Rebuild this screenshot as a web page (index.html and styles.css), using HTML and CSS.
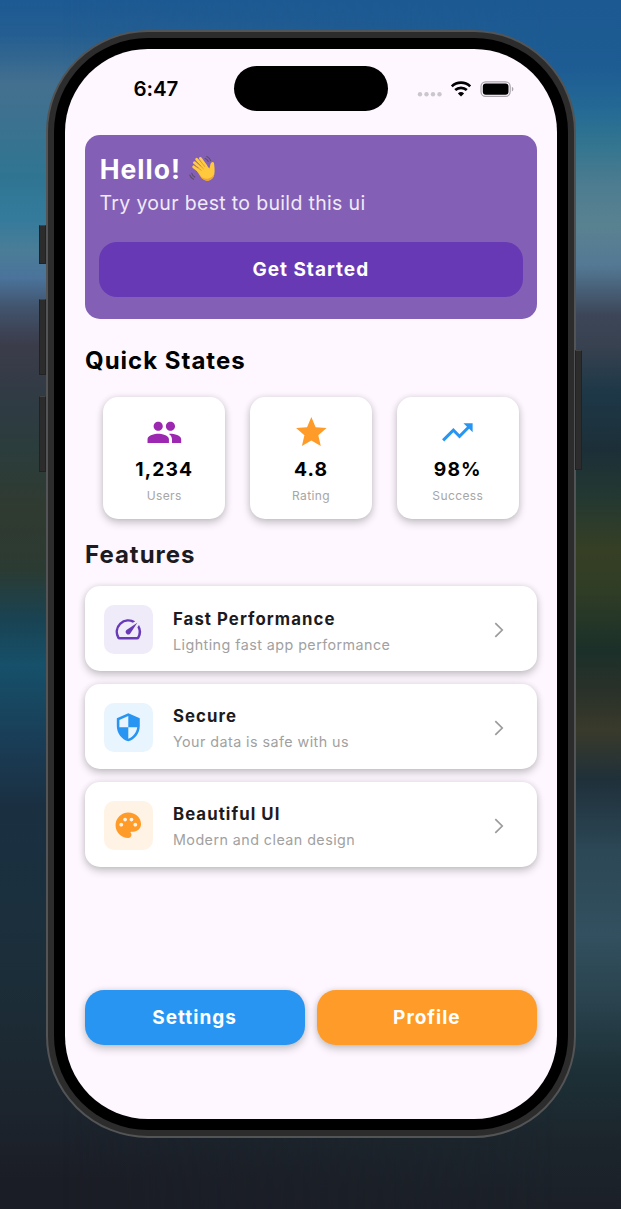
FILE: index.html
```html
<!DOCTYPE html>
<html lang="en">
<head>
<meta charset="utf-8">
<title>Hello</title>
<link rel="stylesheet" href="styles.css">
</head>
<body>
<div class="wallpaper"></div>
<div class="phone">
  <span class="key key-action"></span>
  <span class="key key-up"></span>
  <span class="key key-down"></span>
  <span class="key key-power"></span>
  <div class="bezel">
    <div class="screen">
      <header class="status">
        <span class="time">6:47</span>
        <span class="island"></span>
        <svg class="indicators" width="98" height="18" viewBox="0 0 98 18">
          <g fill="#cbc5ce"><circle cx="4" cy="13.2" r="2.2"/><circle cx="10.5" cy="13.2" r="2.2"/><circle cx="17" cy="13.2" r="2.2"/><circle cx="23.5" cy="13.2" r="2.2"/></g>
          <g fill="none" stroke="#000" stroke-width="2.7"><path d="M35.8 5.4a13.3 13.3 0 0 1 18.4 0"/><path d="M39.2 9.1a8.4 8.4 0 0 1 11.6 0"/></g>
          <path d="M45 15.6l-3.1-3.2a4.6 4.6 0 0 1 6.2 0z"/>
          <rect x="65" y=".8" width="29.2" height="14.6" rx="4.6" fill="none" stroke="#a9a4ab" stroke-width="1.2"/>
          <rect x="66.8" y="2.5" width="25.7" height="11.2" rx="3"/>
          <path d="M95.9 5.8c2 .8 2 3.9 0 4.7z" fill="#a9a4ab"/>
        </svg>
      </header>
      <main class="content">
        <section class="hero">
          <h1 class="hello"><span>Hello!</span>
            <svg class="wave" width="28" height="28" viewBox="0 0 28 28">
              <g fill="none" stroke="#5d4c6c" stroke-width="1.1" stroke-linecap="round"><path d="M16.2 3.4q2 .8 3 3M17.8 1.4q2.7 1.2 3.9 4.2M2.8 18.4q.6 2.4 3 3.7M.8 20q1 2.9 3.8 4.3"/></g>
              <g fill="none" stroke="#ffcb45" stroke-width="2.7" stroke-linecap="round"><path d="M13 14L5.4 7.6M15 12L7.6 4.2M17 11L11.4 3.4M12 17.4L4.6 11.8"/></g>
              <path d="M7 14.8L16 8.8Q18 10.5 20.3 13.5C21.4 11.5 20.8 9.5 22 7.9Q23.5 6.2 24.9 7.7C25.3 10.3 25.7 13 25.6 16.4Q25.4 22.2 21.6 24.8Q17 27 13 23.6Z" fill="#ffc83d"/>
              <path d="M9.5 19Q14.3 24.4 18.7 23.8Q23.6 22.7 25.5 18.8Q25.1 22.6 21.6 24.8Q17 27.1 13 23.6Z" fill="#efa32f"/>
              <g fill="none" stroke="#d18a35" stroke-width=".7" stroke-linecap="round"><path d="M5.6 10l6.6 5.3M7.2 6.8l7 6.7M10.3 4.8l5.4 6.7"/></g>
            </svg>
          </h1>
          <p class="tagline">Try your best to build this ui</p>
          <button class="start">Get Started</button>
        </section>
        <h2 class="heading black">Quick States</h2>
        <section class="stats">
          <div class="stat">
            <svg width="36.7" height="36.7" viewBox="0 0 24 24" fill="#9c27b0"><path d="M16 11c1.66 0 2.99-1.34 2.99-3S17.66 5 16 5s-3 1.34-3 3 1.34 3 3 3zm-8 0c1.66 0 2.99-1.34 2.99-3S9.66 5 8 5 5 6.34 5 8s1.34 3 3 3zm0 2c-2.33 0-7 1.17-7 3.5V19h14v-2.5c0-2.33-4.67-3.5-7-3.5zm8 0c-.29 0-.62.02-.97.05 1.16.84 1.97 1.97 1.97 3.45V19h6v-2.5c0-2.33-4.67-3.5-7-3.5z"/></svg>
            <strong class="value">1,234</strong><span class="label">Users</span>
          </div>
          <div class="stat">
            <svg width="36.7" height="36.7" viewBox="0 0 24 24" fill="#ff9b28"><path d="M12 17.27L18.18 21l-1.64-7.03L22 9.24l-7.19-.61L12 2 9.19 8.63 2 9.24l5.46 4.73L5.82 21z"/></svg>
            <strong class="value">4.8</strong><span class="label">Rating</span>
          </div>
          <div class="stat">
            <svg width="36.7" height="36.7" viewBox="0 0 24 24" fill="#2895f2"><path d="M16 6l2.29 2.29-4.88 4.88-4-4L2 16.59 3.41 18l6-6 4 4 6.3-6.29L22 12V6z"/></svg>
            <strong class="value">98%</strong><span class="label">Success</span>
          </div>
        </section>
        <h2 class="heading features-title">Features</h2>
        <section class="features">
          <article class="feature">
            <span class="tile violet"><svg width="30.6" height="30.6" viewBox="0 0 24 24" fill="#673ab7"><path d="M20.38 8.57l-1.23 1.85a8 8 0 0 1-.22 7.58H5.07A8 8 0 0 1 15.58 6.85l1.85-1.23A10 10 0 0 0 3.35 19a2 2 0 0 0 1.72 1h13.85a2 2 0 0 0 1.74-1 10 10 0 0 0-.27-10.44zm-9.79 6.84a2 2 0 0 0 2.83 0l5.66-8.49-8.49 5.66a2 2 0 0 0 0 2.83z"/></svg></span>
            <div class="copy"><h3 class="title">Fast Performance</h3><p class="detail">Lighting fast app performance</p></div>
            <svg class="chevron" width="10" height="16" viewBox="0 0 10 16"><path d="M1.3 1.2L8.2 8l-6.9 6.8"/></svg>
          </article>
          <article class="feature">
            <span class="tile sky"><svg width="30.6" height="30.6" viewBox="0 0 24 24" fill="#2895f2"><path d="M12 1L3 5v6c0 5.55 3.84 10.74 9 12 5.16-1.26 9-6.45 9-12V5l-9-4zm0 10.99h7c-.53 4.12-3.28 7.79-7 8.94V12H5V6.3l7-3.11v8.8z"/></svg></span>
            <div class="copy"><h3 class="title">Secure</h3><p class="detail">Your data is safe with us</p></div>
            <svg class="chevron" width="10" height="16" viewBox="0 0 10 16"><path d="M1.3 1.2L8.2 8l-6.9 6.8"/></svg>
          </article>
          <article class="feature">
            <span class="tile peach"><svg width="30.6" height="30.6" viewBox="0 0 24 24" fill="#ff9b28"><path d="M12 2C6.49 2 2 6.49 2 12s4.49 10 10 10c1.38 0 2.5-1.12 2.5-2.5 0-.61-.23-1.2-.64-1.67-.08-.1-.13-.21-.13-.33 0-.28.22-.5.5-.5H16c3.31 0 6-2.69 6-6 0-4.96-4.49-9-10-9zm5.5 11c-.83 0-1.5-.67-1.5-1.5s.67-1.5 1.5-1.5 1.5.67 1.5 1.5-.67 1.5-1.5 1.5zm-3-4c-.83 0-1.5-.67-1.5-1.5S13.67 6 14.5 6s1.5.67 1.5 1.5S15.33 9 14.5 9zM5 11.5c0-.83.67-1.5 1.5-1.5S8 10.67 8 11.5 7.33 13 6.5 13 5 12.33 5 11.5zm6-4C11 8.33 10.33 9 9.5 9S8 8.33 8 7.5 8.67 6 9.5 6s1.5.67 1.5 1.5z"/></svg></span>
            <div class="copy"><h3 class="title">Beautiful UI</h3><p class="detail">Modern and clean design</p></div>
            <svg class="chevron" width="10" height="16" viewBox="0 0 10 16"><path d="M1.3 1.2L8.2 8l-6.9 6.8"/></svg>
          </article>
        </section>
        <footer class="actions">
          <button class="action blue">Settings</button>
          <button class="action orange">Profile</button>
        </footer>
      </main>
    </div>
  </div>
</div>
</body>
</html>
```
FILE: styles.css
```css
* { box-sizing: border-box; margin: 0; }

body {
  height: 1209px;
  padding: 30px 45px 0 46px;
  overflow: hidden;
  position: relative;
  font-family: Inter, "Liberation Sans", sans-serif;
  background: linear-gradient(#1d5993 0, #245e91 35px, #44708f 85px, #3b728f 125px, #2f7592 175px, #347a9b 218px, #4a7d97 250px, #4b739b 278px, #41536c 308px, #3b3c4a 345px, #303b44 400px, #2b3d3c 450px, #303a30 510px, #2b3b33 570px, #194353 620px, #16506a 665px, #1a3b54 750px, #1a2f40 810px, #1b303e 900px, #1c2c36 1010px, #1c242d 1110px, #1b1d26 1180px);
}

.wallpaper {
  position: absolute;
  inset: 0;
  background: linear-gradient(#1c5992 0, #1d5b93 65px, #246a95 110px, #33758f 145px, #4d7c90 185px, #598290 225px, #547995 265px, #3c4658 315px, #37414f 348px, #1e3848 390px, #1c2f38 450px, #233832 495px, #363f24 550px, #303d26 590px, #1b3029 650px, #293129 690px, #393a2b 730px, #1f303a 780px, #2c4756 850px, #32505f 935px, #2a434e 1000px, #1d3037 1070px, #1c252c 1140px, #1b2028 1209px);
  mask-image: linear-gradient(90deg, transparent 10%, #000 90%);
}

.phone {
  position: relative;
  z-index: 1;
  width: 530px;
  height: 1108px;
  padding: 6px;
  border: 2px solid #535455;
  border-radius: 102px;
  background: #2c2c2c;
}

.bezel {
  height: 100%;
  padding: 11px;
  border-radius: 94px;
  background: #000;
}

.screen {
  height: 100%;
  border-radius: 83px;
  background: #fef7ff;
  overflow: hidden;
}

/* hardware buttons stick out of the frame */
.key {
  position: absolute;
  z-index: -1;
  width: 7px;
  left: -9px;
  background: #2c2c2c;
  border: 1px solid #222;
  border-top-color: #444;
}
.key-action { top: 193px; height: 39px; }
.key-up { top: 267px; height: 76px; }
.key-down { top: 364px; height: 76px; }
.key-power { top: 318px; height: 120px; left: auto; right: -8px; }

.status {
  display: flex;
  align-items: center;
  height: 86.4px;
  padding: 0 41px 7px 68.5px;
}
.time { width: 100.5px; font-size: 20.5px; font-weight: 600; letter-spacing: -.1px; }
.island { width: 154px; height: 45px; border-radius: 23px; background: #000; }
.indicators { margin: 2px 0 0 28px; }

.content {
  display: flex;
  flex-direction: column;
  padding: 0 20px 0 19.5px;
}

.hero {
  height: 183.6px;
  padding: 18px 14.5px 0;
  border-radius: 15px;
  background: #8360b6;
  color: #fff;
}
.hello {
  display: flex;
  align-items: center;
  gap: 8px;
  height: 32px;
  padding-left: .7px;
  font-size: 26.5px;
  font-weight: 700;
  letter-spacing: 1px;
}
.tagline {
  height: 35px;
  padding-left: .5px;
  line-height: 36px;
  font-size: 19.5px;
  color: #f0eaf6;
  letter-spacing: .33px;
}
.start {
  display: block;
  width: 100%;
  height: 55px;
  margin-top: 21.5px;
  border: 0;
  border-radius: 18px;
  background: #6739b5;
  color: #fff;
  font: 650 19px Inter, "Liberation Sans", sans-serif;
  letter-spacing: 1px;
}

.heading {
  height: 32px;
  margin-top: 26px;
  padding-left: .5px;
  line-height: 31px;
  font-size: 24px;
  font-weight: 650;
  letter-spacing: 1px;
  color: #1d1b20;
}
.black { color: #000; }
.features-title { margin-top: 20px; }

.stats {
  display: flex;
  justify-content: space-between;
  padding: 0 18px 0 18.5px;
  margin-top: 20px;
}
.stat {
  display: flex;
  flex-direction: column;
  align-items: center;
  width: 122.4px;
  height: 122.5px;
  padding-top: 17px;
  border-radius: 15px;
  background: #fff;
  box-shadow: 0 4px 8px rgba(0, 0, 0, .2), 0 0 6px rgba(0, 0, 0, .1);
}
.value {
  height: 24px;
  margin-top: 6.6px;
  line-height: 24px;
  font-size: 19.3px;
  font-weight: 650;
  letter-spacing: 1.1px;
}
.label {
  margin-top: 5.4px;
  line-height: 17px;
  font-size: 12px;
  color: #a6a6a6;
  letter-spacing: .4px;
}

.features {
  display: flex;
  flex-direction: column;
  gap: 12.5px;
  margin-top: 14.4px;
}
.feature {
  display: flex;
  align-items: center;
  height: 85.4px;
  padding: 0 33px 0 19.5px;
  border-radius: 15px;
  background: #fff;
  box-shadow: 0 4px 8px rgba(0, 0, 0, .2), 0 0 6px rgba(0, 0, 0, .1);
}
.tile {
  display: grid;
  place-items: center;
  width: 49px;
  height: 49px;
  margin-top: 2px;
  border-radius: 10px;
}
.violet { background: #efebf8; }
.sky { background: #e8f4fe; }
.peach { background: #fff3e5; }
.copy { flex: 1; padding: 6px 0 0 20px; }
.title {
  line-height: 26px;
  font-size: 16.8px;
  font-weight: 650;
  color: #1d1b20;
  letter-spacing: 1.05px;
}
.detail {
  line-height: 26px;
  font-size: 14.3px;
  color: #a1a1a1;
  letter-spacing: .45px;
}
.chevron { margin-top: 3px; fill: none; stroke: #9b9b9b; stroke-width: 1.7; }

.actions {
  display: flex;
  gap: 12px;
  margin-top: 123px;
}
.action {
  flex: 1;
  height: 55px;
  border: 0;
  border-radius: 19px;
  color: #fff;
  font: 650 19px Inter, "Liberation Sans", sans-serif;
  letter-spacing: 1px;
  box-shadow: 0 4px 8px rgba(0, 0, 0, .2), 0 0 6px rgba(0, 0, 0, .1);
}
.blue { background: #2895f2; }
.orange { background: #ff9b28; }
```
